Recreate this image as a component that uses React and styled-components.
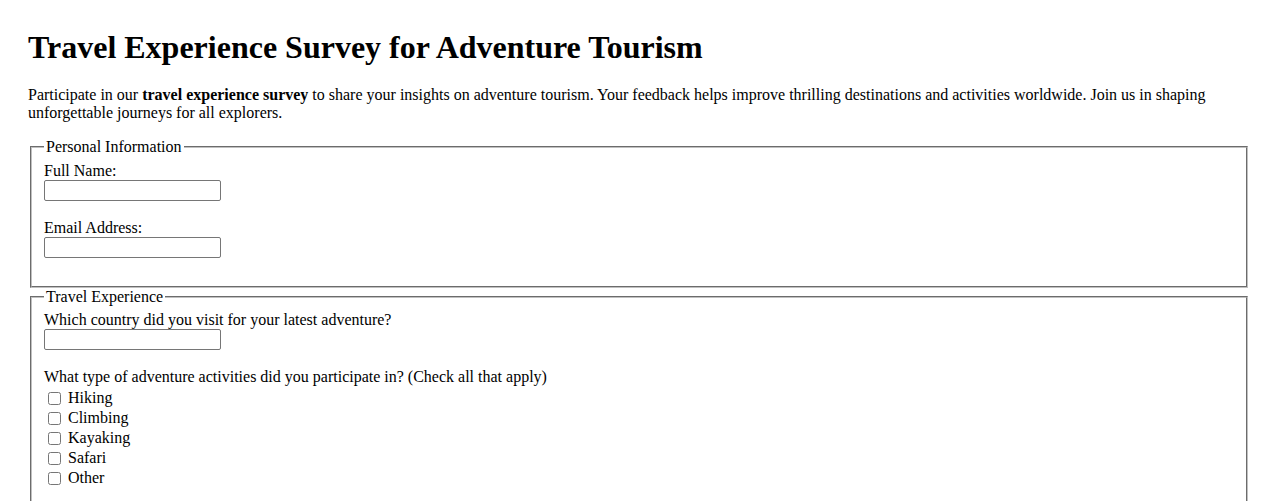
import React from 'react';
import styled, { createGlobalStyle } from 'styled-components';

const GlobalStyle = createGlobalStyle`
    body {
        margin: 0;
        background: #ffffff;
        color: #000000;
        font-family: "Liberation Serif", "Times New Roman", serif;
        font-size: 16px;
    }
`;

const Page = styled.div`
    padding: 0 28px 28px 28px;
`;

const Title = styled.h1`
    font-size: 32px;
    font-weight: bold;
    margin: 0 0 20px 0;
    padding-top: 29px;
`;

const Intro = styled.p`
    margin: 0 0 16px 0;
    line-height: normal;
`;

const Section = styled.fieldset`
    margin: 0 2px;
    padding: 5.6px 12px 10px 12px;
    border: 2px groove #c0c0c0;
`;

const Legend = styled.legend`
    padding: 0 2px;
`;

const Field = styled.div`
    margin-bottom: 18px;
`;

const Label = styled.label`
    display: block;
`;

const TextInput = styled.input`
    display: block;
    box-sizing: border-box;
    width: 177px;
    height: 21px;
    margin: 0;
    padding: 1px 2px;
    border: 1px solid #767676;
    border-radius: 2px;
    font-family: Arial, "Liberation Sans", sans-serif;
    font-size: 13.33px;
`;

const CheckList = styled.div`
    padding-top: 2px;
`;

const CheckRow = styled.label`
    display: flex;
    align-items: center;
    height: 20px;
`;

const Check = styled.input`
    width: 13px;
    height: 13px;
    margin: 0 7px 0 4px;
`;

const activities = ['Hiking', 'Climbing', 'Kayaking', 'Safari', 'Other'];

function App() {
    return (
        <Page>
            <GlobalStyle />
            <Title>Travel Experience Survey for Adventure Tourism</Title>
            <Intro>
                Participate in our <strong>travel experience survey</strong> to share your insights on adventure tourism. Your feedback helps improve thrilling destinations and activities worldwide. Join us in shaping unforgettable journeys for all explorers.
            </Intro>
            <form>
                <Section>
                    <Legend>Personal Information</Legend>
                    <Field>
                        <Label htmlFor="name">Full Name:</Label>
                        <TextInput id="name" type="text" />
                    </Field>
                    <Field>
                        <Label htmlFor="email">Email Address:</Label>
                        <TextInput id="email" type="email" />
                    </Field>
                </Section>
                <Section>
                    <Legend>Travel Experience</Legend>
                    <Field>
                        <Label htmlFor="country">Which country did you visit for your latest adventure?</Label>
                        <TextInput id="country" type="text" />
                    </Field>
                    <Field>
                        <Label>What type of adventure activities did you participate in? (Check all that apply)</Label>
                        <CheckList>
                            {activities.map(a => (
                                <CheckRow key={a}>
                                    <Check type="checkbox" />
                                    {a}
                                </CheckRow>
                            ))}
                        </CheckList>
                    </Field>
                </Section>
            </form>
        </Page>
    );
}

export default App;
